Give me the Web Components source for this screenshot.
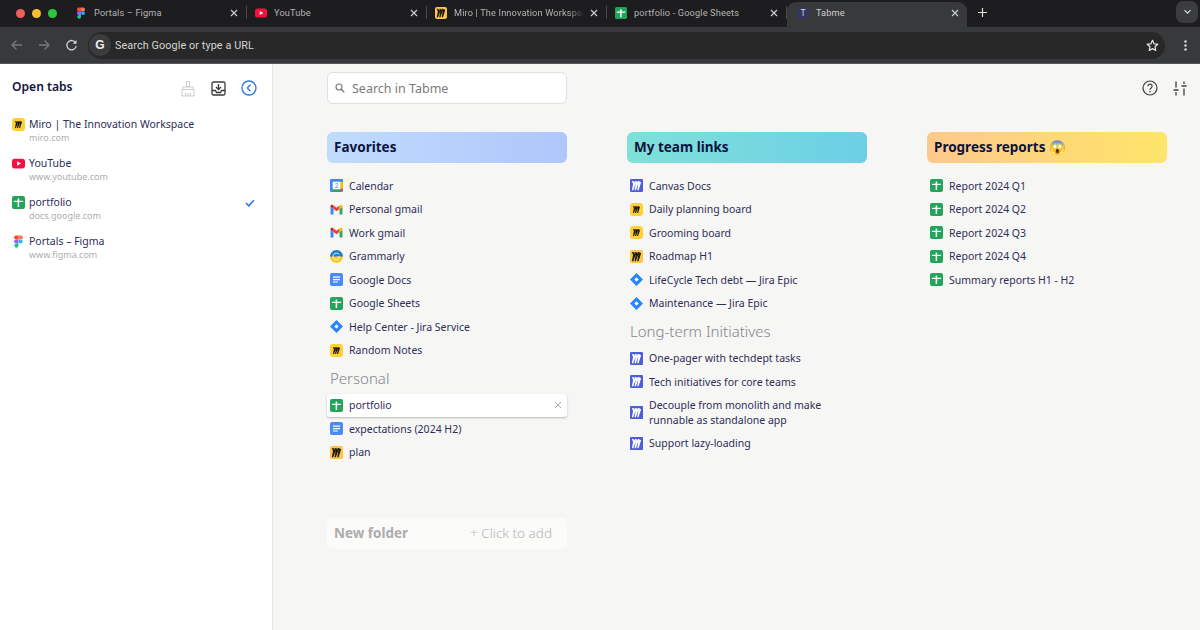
<!DOCTYPE html>
<html>
<head>
<meta charset="utf-8">
<title>Tabme</title>
<style>
html,body{margin:0;height:100%;background:#f6f6f4;overflow:hidden}
body{font-family:"Noto Sans","Open Sans",sans-serif;display:flex;flex-direction:column;height:630px}
.work{display:flex;height:566px}
</style>
</head>
<body>
<browser-chrome>
  <browser-tab icon="figma" slot="tabs">Portals – Figma</browser-tab>
  <browser-tab icon="youtube" slot="tabs">YouTube</browser-tab>
  <browser-tab icon="miro-bright" slot="tabs" fade>Miro | The Innovation Workspace</browser-tab>
  <browser-tab icon="sheets" slot="tabs">portfolio - Google Sheets</browser-tab>
  <browser-tab icon="tabme" slot="tabs" active>Tabme</browser-tab>
</browser-chrome>
<div class="work">
  <side-panel>
    <open-tab icon="miro" url="miro.com">Miro | The Innovation Workspace</open-tab>
    <open-tab icon="youtube" url="www.youtube.com">YouTube</open-tab>
    <open-tab icon="sheets" url="docs.google.com" saved>portfolio</open-tab>
    <open-tab icon="figma" url="www.figma.com">Portals – Figma</open-tab>
  </side-panel>
  <main-board>
    <link-folder heading="Favorites" tone="blue">
      <link-row icon="calendar">Calendar</link-row>
      <link-row icon="gmail">Personal gmail</link-row>
      <link-row icon="gmail">Work gmail</link-row>
      <link-row icon="grammarly">Grammarly</link-row>
      <link-row icon="docs">Google Docs</link-row>
      <link-row icon="sheets">Google Sheets</link-row>
      <link-row icon="jira">Help Center - Jira Service</link-row>
      <link-row icon="miro">Random Notes</link-row>
      <folder-label>Personal</folder-label>
      <link-row icon="sheets" hovered>portfolio</link-row>
      <link-row icon="docs">expectations (2024 H2)</link-row>
      <link-row icon="miro-bright">plan</link-row>
      <new-folder></new-folder>
    </link-folder>
    <link-folder heading="My team links" tone="teal">
      <link-row icon="canvas">Canvas Docs</link-row>
      <link-row icon="miro">Daily planning board</link-row>
      <link-row icon="miro">Grooming board</link-row>
      <link-row icon="miro-bright">Roadmap H1</link-row>
      <link-row icon="jira">LifeCycle Tech debt — Jira Epic</link-row>
      <link-row icon="jira">Maintenance — Jira Epic</link-row>
      <folder-label>Long-term Initiatives</folder-label>
      <link-row icon="canvas">One-pager with techdept tasks</link-row>
      <link-row icon="canvas">Tech initiatives for core teams</link-row>
      <link-row icon="canvas">Decouple from monolith and make runnable as standalone app</link-row>
      <link-row icon="canvas">Support lazy-loading</link-row>
    </link-folder>
    <link-folder heading="Progress reports 😱" tone="amber">
      <link-row icon="sheets">Report 2024 Q1</link-row>
      <link-row icon="sheets">Report 2024 Q2</link-row>
      <link-row icon="sheets">Report 2024 Q3</link-row>
      <link-row icon="sheets">Report 2024 Q4</link-row>
      <link-row icon="sheets">Summary reports H1 - H2</link-row>
    </link-folder>
  </main-board>
</div>

<script>
const MIRO_PATH = 'M17.4 0H13.9L17 4.8 10.4 0H6.9l3.1 6.3L3.5 0H0l3 8.1L0 24h3.5L10 7 6.9 24h3.5L17 5.5 13.9 24h3.5L24 3.7 17.4 0z';

const ICONS = {
    miro: `<rect width="24" height="24" rx="6" fill="#ffd02f"/><path fill="#1d1a12" transform="translate(5.5 5.5) scale(.54)" d="${MIRO_PATH}"/>`,
    'miro-bright': `<rect width="24" height="24" rx="4" fill="#fdc645"/><path fill="#1d1a12" transform="translate(3.5 3.5) scale(.71)" d="${MIRO_PATH}"/>`,
    canvas: `<rect width="24" height="24" rx="2" fill="#4c5fd8"/><path fill="#fff" transform="translate(3.5 3.5) scale(.71)" d="${MIRO_PATH}"/>`,
    sheets: '<rect width="24" height="24" rx="3.5" fill="#22a55a"/><path fill="#fff" d="M10.400 4.500h2.800v4.300h7.300v2.500h-7.300v9.200h-2.800v-9.200H3.500V8.800h6.900z"/>',
    docs: '<rect width="24" height="24" rx="3.5" fill="#4a8af4"/><path fill="#fff" d="M5.500 6.500h13v2.200h-13zM5.500 11h13v2.200h-13zM5.500 15.500h9v2.200h-9z"/>',
    youtube: '<rect y="3" width="24" height="18" rx="5" fill="#f5103f"/><path fill="#fff" d="M9.500 8l7 4-7 4z"/>',
    figma: '<path fill="#f24e1e" d="M7.500 1H12v7.400H7.500a3.700 3.700 0 0 1 0-7.400z"/><path fill="#ff7262" d="M12 1h4.300a3.700 3.700 0 0 1 0 7.400H12z"/><path fill="#a259ff" d="M7.500 8.400H12v7.400H7.500a3.700 3.700 0 0 1 0-7.400z"/><circle cx="16" cy="12.100" r="3.700" fill="#1abcfe"/><path fill="#0acf83" d="M7.500 15.800H12v3.500a3.800 3.800 0 1 1-4.500-3.500z"/>',
    gmail: '<path fill="#4285f4" d="M1 21h5.500V11L1 7z"/><path fill="#34a853" d="M17.500 21H23V7l-5.500 4z"/><path fill="#ea4335" d="M6.500 11L12 15.200 17.500 11V4.500L12 8.700 6.500 4.500z"/><path fill="#fbbc04" d="M17.500 4.500V11L23 7V5.500c0-2-2.300-3.200-4-2z"/><path fill="#c5221f" d="M1 7l5.500 4V4.500l-1.500-1c-1.700-1.200-4 0-4 2z"/>',
    calendar: '<rect width="24" height="24" rx="2.500" fill="#4285f4"/><path fill="#fbbc04" d="M18.500 5.500H24V18h-5.500z"/><path fill="#34a853" d="M5.500 18.500H18V24H5.500z"/><path fill="#ea4335" d="M18.500 18.500H24L18.500 24z"/><rect x="5" y="5" width="14" height="14" fill="#fff"/><text x="12" y="16.500" font-size="12" text-anchor="middle" fill="#4285f4" font-family="Roboto, sans-serif">2</text>',
    grammarly: '<circle cx="12" cy="12" r="12" fill="#fbc81e"/><path fill="#1b7fd1" d="M0 12a12 12 0 0 1 24 0z"/><path fill="none" stroke="#e9f3fb" stroke-width="1.800" d="M17 8.500A6.200 6.200 0 1 0 18 13h-5"/>',
    jira: '<path fill="#2684ff" d="M12 0l12 12-12 12L0 12z"/><path fill="#fff" d="M12 8l4 4-4 4-4-4z"/>',
    tabme: '<rect width="24" height="24" rx="6" fill="#35365c"/><text x="12" y="18" font-size="17" text-anchor="middle" fill="#d8d8e6" font-family="Roboto, sans-serif">T</text>',
};

class AppIcon extends HTMLElement {
    static get observedAttributes() { return ['name']; }
    constructor() {
        super();
        this.attachShadow({ mode: 'open' });
    }
    connectedCallback() { this.render(); }
    attributeChangedCallback() { this.render(); }
    render() {
        const size = this.getAttribute('size') || 13;
        this.shadowRoot.innerHTML = `
            <style>:host{display:inline-flex;flex:none;width:${size}px;height:${size}px} svg{width:100%;height:100%;display:block}</style>
            <svg viewBox="0 0 24 24">${ICONS[this.getAttribute('name')] || ''}</svg>`;
    }
}
customElements.define('app-icon', AppIcon);

const chromeTemplate = document.createElement('template');
chromeTemplate.innerHTML = `
    <style>
    :host{display:block;height:64px;flex:none;font-family:Roboto,"Liberation Sans",sans-serif;color:#b4b4b4}
    .strip{height:27px;background:#1d1d1f;display:flex;align-items:flex-end}
    .lights{width:67px;height:25px;flex:none;display:flex;align-items:center;gap:7px;padding-left:16px;padding-bottom:2px;box-sizing:border-box}
    .lights i{width:9px;height:9px;border-radius:50%}
    .tabs{display:flex}
    .plus{margin:0 0 4px 10px;width:12px;height:22px;display:flex;align-items:center}
    .more{margin:1px 2px 0 auto;align-self:flex-start;width:22px;height:22px;background:#3b3c3e;border-radius:7px;display:flex;align-items:center;justify-content:center}
    .bar{height:36px;background:#38393b;display:flex;align-items:center;box-sizing:border-box;padding:0 5px 0 9px}
    .nav{display:flex;gap:14.500px;align-items:center;width:79px;flex:none;padding-left:1px;box-sizing:border-box}
    .omni{flex:1;height:27px;border-radius:14px;background:#282828;display:flex;align-items:center;font-size:10.800px;color:#d4d4d4;letter-spacing:.1px;padding:0 6px 0 1px}
    .g{width:22px;height:22px;border-radius:50%;background:#3c3c3e;display:flex;align-items:center;justify-content:center;font:700 12px "Liberation Sans",sans-serif;color:#eee;margin-right:4px}
    .omni span{flex:1}
    .kebab{width:20px;margin-left:10px;display:flex;justify-content:center}
    .edge{height:1px;background:#55565a}
    svg{display:block}
    </style>
    <div class="strip">
        <div class="lights"><i style="background:#ee5f57"></i><i style="background:#f6be2f"></i><i style="background:#2ac840"></i></div>
        <div class="tabs"><slot name="tabs"></slot></div>
        <div class="plus"><svg width="11" height="11" viewBox="0 0 11 11"><path d="M5.500 1v9M1 5.500h9" stroke="#ddd" stroke-width="1.200"/></svg></div>
        <div class="more"><svg width="9" height="6" viewBox="0 0 9 6"><path d="M1.500 1.200l3 3 3-3" stroke="#ddd" stroke-width="1.200" fill="none"/></svg></div>
    </div>
    <div class="bar">
        <div class="nav">
            <svg width="13" height="12" viewBox="0 0 13 12"><path d="M12 6H2M6.500 1.500L2 6l4.500 4.500" stroke="#77787a" stroke-width="1.300" fill="none"/></svg>
            <svg width="13" height="12" viewBox="0 0 13 12"><path d="M1 6h10M6.500 1.500L11 6l-4.500 4.500" stroke="#77787a" stroke-width="1.300" fill="none"/></svg>
            <svg width="13" height="13" viewBox="0 0 13 13"><path d="M10.800 4.200A4.700 4.700 0 1 0 11.200 7" stroke="#d0d0d0" stroke-width="1.300" fill="none"/><path d="M11.500 1v3.800H7.700z" fill="#d0d0d0"/></svg>
        </div>
        <div class="omni">
            <div class="g">G</div><span>Search Google or type a URL</span>
            <svg width="13" height="13" viewBox="0 0 24 24"><path d="M12 2.500l2.900 6.300 6.800.8-5 4.700 1.300 6.800-6-3.400-6 3.400 1.300-6.800-5-4.700 6.800-.8z" fill="none" stroke="#e4e4e4" stroke-width="2.300" stroke-linejoin="round"/></svg>
        </div>
        <div class="kebab"><svg width="3" height="11" viewBox="0 0 3 11"><circle cx="1.500" cy="1.500" r="1.200" fill="#ddd"/><circle cx="1.500" cy="5.500" r="1.200" fill="#ddd"/><circle cx="1.500" cy="9.500" r="1.200" fill="#ddd"/></svg></div>
    </div>
    <div class="edge"></div>`;
class BrowserChrome extends HTMLElement {
    constructor() {
        super();
        this.attachShadow({ mode: 'open' }).append(chromeTemplate.content.cloneNode(true));
    }
}
customElements.define('browser-chrome', BrowserChrome);

const tabTemplate = document.createElement('template');
tabTemplate.innerHTML = `
    <style>
    :host{display:block;width:180px;height:25px;box-sizing:border-box}
    .tab{height:100%;display:flex;align-items:center;padding:0 0 4px 8px;box-sizing:border-box;font-size:9.200px;letter-spacing:.15px}
    .sep{height:13px;width:1px;background:#47484a;flex:none;margin-left:8px}
    :host([active]) .tab{background:#38393b;border-radius:9px 9px 0 0;color:#cfcfcf;padding-left:10px}
    :host([active]) .sep{background:transparent;margin-left:7px}
    .label{flex:1;margin-left:7px;white-space:nowrap;overflow:hidden}
    :host([fade]) .label{-webkit-mask-image:linear-gradient(90deg,#000 88%,transparent)}
    .x{margin-left:6px;flex:none}
    svg{display:block}
    </style>
    <div class="tab">
        <app-icon size="12"></app-icon>
        <span class="label"><slot></slot></span>
        <svg class="x" width="8" height="8" viewBox="0 0 8 8"><path d="M1 1l6 6M7 1L1 7" stroke="#ccc" stroke-width="1.200"/></svg>
        <span class="sep"></span>
    </div>`;
class BrowserTab extends HTMLElement {
    constructor() {
        super();
        this.attachShadow({ mode: 'open' }).append(tabTemplate.content.cloneNode(true));
        this.shadowRoot.querySelector('app-icon').setAttribute('name', this.getAttribute('icon'));
    }
}
customElements.define('browser-tab', BrowserTab);

const sideTemplate = document.createElement('template');
sideTemplate.innerHTML = `
    <style>
    :host{display:block;width:273px;flex:none;background:#fff;border-right:1px solid #e4e4e4;box-sizing:border-box;padding:12px 0 0 0;color:#14143c}
    header{height:24px;display:flex;align-items:center;padding:0 15px 0 12px}
    h2{margin:0 0 3px;font-size:12.100px;font-weight:600;flex:1;color:#14143c}
    .tools{display:flex;align-items:center;gap:15px}
    .list{margin-top:17px;display:flex;flex-direction:column}
    svg{display:block}
    </style>
    <header>
        <h2>Open tabs</h2>
        <div class="tools">
            <svg width="16" height="17" viewBox="0 0 16 17"><path d="M6.500 1.500h3v5h-3zM3 7h10v2.500H3zM2 9.500h12V16H2zM5.500 13v3M8 13v3M10.500 13v3" fill="none" stroke="#cfcfcf" stroke-width="1.100"/></svg>
            <svg width="15" height="15" viewBox="0 0 15 15"><path d="M2.500 1h10A1.500 1.500 0 0 1 14 2.500v10a1.500 1.500 0 0 1-1.500 1.500h-10A1.500 1.500 0 0 1 1 12.500v-10A1.500 1.500 0 0 1 2.500 1zM1 9.500h3.500l1 2h4l1-2H14" fill="none" stroke="#3a3a3a" stroke-width="1.300"/><path d="M7.500 3v5M5 6l2.500 2.500L10 6" fill="none" stroke="#3a3a3a" stroke-width="1.300"/></svg>
            <svg width="16" height="16" viewBox="0 0 16 16"><circle cx="8" cy="8" r="7" fill="none" stroke="#2a77e0" stroke-width="1.300"/><path d="M9.500 4.800L6.300 8l3.200 3.200" fill="none" stroke="#2a77e0" stroke-width="1.300"/></svg>
        </div>
    </header>
    <div class="list"><slot></slot></div>`;
class SidePanel extends HTMLElement {
    constructor() {
        super();
        this.attachShadow({ mode: 'open' }).append(sideTemplate.content.cloneNode(true));
    }
}
customElements.define('side-panel', SidePanel);

const openTabTemplate = document.createElement('template');
openTabTemplate.innerHTML = `
    <style>
    :host{display:flex;height:39px;padding:0 17px 0 12px;box-sizing:border-box;align-items:flex-start}
    app-icon{margin:1px 4px 0 0}
    .text{flex:1;min-width:0}
    .title{font-size:10.500px;line-height:15px;color:#2e2e58}
    .url{font-size:9px;line-height:12px;color:#aeaeae}
    svg{margin-top:4px;display:none}
    :host([saved]) svg{display:block}
    </style>
    <app-icon></app-icon>
    <div class="text"><div class="title"><slot></slot></div><div class="url"></div></div>
    <svg width="10" height="8" viewBox="0 0 10 8"><path d="M1 4l2.800 2.800L9 1.200" fill="none" stroke="#2a77e0" stroke-width="1.500"/></svg>`;
class OpenTab extends HTMLElement {
    constructor() {
        super();
        this.attachShadow({ mode: 'open' }).append(openTabTemplate.content.cloneNode(true));
        this.shadowRoot.querySelector('app-icon').setAttribute('name', this.getAttribute('icon'));
        this.shadowRoot.querySelector('.url').textContent = this.getAttribute('url');
    }
}
customElements.define('open-tab', OpenTab);

const boardTemplate = document.createElement('template');
boardTemplate.innerHTML = `
    <style>
    :host{display:block;flex:1;padding:8px 0 0 54px;box-sizing:border-box;min-width:0}
    .top{display:flex;align-items:center;justify-content:space-between;padding-right:13px;height:32px}
    .search{width:240px;height:32px;box-sizing:border-box;background:#fff;border:1px solid #e0e0e0;border-radius:6px;display:flex;align-items:center;padding-left:7px;gap:7px;font-size:12.500px;color:#7b7b7b}
    .icons{display:flex;gap:15px;align-items:center}
    .cols{display:flex;gap:60px;margin-top:28px}
    svg{display:block}
    </style>
    <div class="top">
        <div class="search">
            <svg width="10" height="10" viewBox="0 0 10 10"><circle cx="4" cy="4" r="3" fill="none" stroke="#777" stroke-width="1.100"/><path d="M6.200 6.200L9.300 9.300" stroke="#777" stroke-width="1.300"/></svg>
            <span>Search in Tabme</span>
        </div>
        <div class="icons">
            <svg width="16" height="16" viewBox="0 0 16 16"><circle cx="8" cy="8" r="7" fill="none" stroke="#3c3c3c" stroke-width="1.200"/><path d="M5.900 6.200a2.100 2.100 0 1 1 3.300 1.700c-.8.500-1.200 1-1.200 1.800" fill="none" stroke="#3c3c3c" stroke-width="1.200"/><circle cx="8" cy="11.700" r=".8" fill="#3c3c3c"/></svg>
            <svg width="14" height="15" viewBox="0 0 14 15"><path d="M3 .5v6M3 11v3.500M11 .5V3M11 7.500v7" stroke="#3c3c3c" stroke-width="1.300" fill="none"/><path d="M.5 9h5M8.500 5h5" stroke="#3c3c3c" stroke-width="1.500"/></svg>
        </div>
    </div>
    <div class="cols"><slot></slot></div>`;
class MainBoard extends HTMLElement {
    constructor() {
        super();
        this.attachShadow({ mode: 'open' }).append(boardTemplate.content.cloneNode(true));
    }
}
customElements.define('main-board', MainBoard);

const folderTemplate = document.createElement('template');
folderTemplate.innerHTML = `
    <style>
    :host{display:block;width:240px;flex:none}
    h3{margin:0 0 11px;height:31px;line-height:31px;padding:0 7px;border-radius:6px;font-size:13.500px;font-weight:700;color:#0d1240;white-space:nowrap}
    :host([tone=blue]) h3{background:linear-gradient(90deg,#c0dcfd,#afc6fb)}
    :host([tone=teal]) h3{background:linear-gradient(90deg,#7fe1d8,#6ccfe6)}
    :host([tone=amber]) h3{background:linear-gradient(90deg,#fdc98c,#fee569)}
    </style>
    <h3></h3>
    <slot></slot>`;
class LinkFolder extends HTMLElement {
    constructor() {
        super();
        this.attachShadow({ mode: 'open' }).append(folderTemplate.content.cloneNode(true));
        this.shadowRoot.querySelector('h3').textContent = this.getAttribute('heading');
    }
}
customElements.define('link-folder', LinkFolder);

const rowTemplate = document.createElement('template');
rowTemplate.innerHTML = `
    <style>
    :host{display:flex;align-items:center;min-height:23.500px;padding:4.500px 5px 4.500px 3px;box-sizing:border-box;gap:6px;font-size:10.500px;line-height:14.500px;color:#2e2e58;border-radius:3px}
    :host([hovered]){background:#fff;box-shadow:0 1px 2px rgba(0,0,0,.25)}
    .label{flex:1}
    .x{display:none}
    :host([hovered]) .x{display:block}
    </style>
    <app-icon></app-icon>
    <span class="label"><slot></slot></span>
    <svg class="x" width="8" height="8" viewBox="0 0 8 8"><path d="M1 1l6 6M7 1L1 7" stroke="#a8a8a8" stroke-width="1"/></svg>`;
class LinkRow extends HTMLElement {
    constructor() {
        super();
        this.attachShadow({ mode: 'open' }).append(rowTemplate.content.cloneNode(true));
        this.shadowRoot.querySelector('app-icon').setAttribute('name', this.getAttribute('icon'));
    }
}
customElements.define('link-row', LinkRow);

const labelTemplate = document.createElement('template');
labelTemplate.innerHTML = `
    <style>:host{display:block;height:31.500px;box-sizing:border-box;padding:1px 0 0 3px;line-height:30px;font-size:15px;font-weight:300;color:#85858f}</style>
    <slot></slot>`;
class FolderLabel extends HTMLElement {
    constructor() {
        super();
        this.attachShadow({ mode: 'open' }).append(labelTemplate.content.cloneNode(true));
    }
}
customElements.define('folder-label', FolderLabel);

const newFolderTemplate = document.createElement('template');
newFolderTemplate.innerHTML = `
    <style>
    :host{display:flex;align-items:center;justify-content:space-between;height:31px;box-sizing:border-box;padding:0 15px 1px 7px;margin-top:54px;background:#fbfbfa;border-radius:6px}
    b{font-size:13.500px;font-weight:700;color:#adadad}
    span{font-size:13.500px;font-weight:300;color:#b4b4b4}
    </style>
    <b>New folder</b><span>+ Click to add</span>`;
class NewFolder extends HTMLElement {
    constructor() {
        super();
        this.attachShadow({ mode: 'open' }).append(newFolderTemplate.content.cloneNode(true));
    }
}
customElements.define('new-folder', NewFolder);
</script>
</body>
</html>
